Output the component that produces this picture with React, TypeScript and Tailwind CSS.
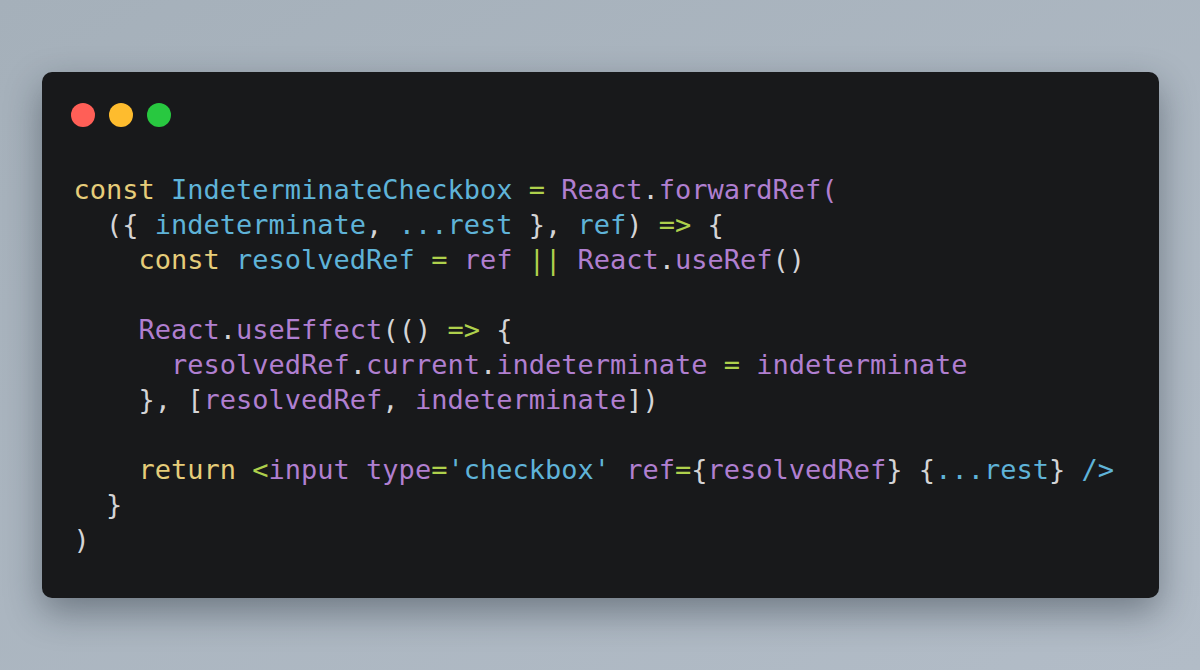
const C = {
  kw: "text-[#e6cd7a]",
  id: "text-[#5fb3d8]",
  fn: "text-[#b07fd0]",
  op: "text-[#aed04c]",
  pn: "text-[#d4d4d6]",
};

type Tok = [string, string];

const lines: Tok[][] = [
  [
    ["const ", C.kw],
    ["IndeterminateCheckbox ", C.id],
    ["= ", C.op],
    ["React", C.fn],
    [".", C.pn],
    ["forwardRef(", C.fn],
  ],
  [
    ["  ({ ", C.pn],
    ["indeterminate", C.id],
    [", ", C.pn],
    ["...rest ", C.id],
    ["}, ", C.pn],
    ["ref", C.id],
    [") ", C.pn],
    ["=> ", C.op],
    ["{", C.pn],
  ],
  [
    ["    const ", C.kw],
    ["resolvedRef ", C.id],
    ["= ", C.op],
    ["ref ", C.fn],
    ["|| ", C.op],
    ["React", C.fn],
    [".", C.pn],
    ["useRef", C.fn],
    ["()", C.pn],
  ],
  [],
  [
    ["    React", C.fn],
    [".", C.pn],
    ["useEffect", C.fn],
    ["(() ", C.pn],
    ["=> ", C.op],
    ["{", C.pn],
  ],
  [
    ["      resolvedRef", C.fn],
    [".", C.pn],
    ["current", C.fn],
    [".", C.pn],
    ["indeterminate ", C.fn],
    ["= ", C.op],
    ["indeterminate", C.fn],
  ],
  [
    ["    }, [", C.pn],
    ["resolvedRef", C.fn],
    [", ", C.pn],
    ["indeterminate", C.fn],
    ["])", C.pn],
  ],
  [],
  [
    ["    return ", C.kw],
    ["<", C.op],
    ["input type", C.fn],
    ["=", C.op],
    ["'checkbox' ", C.id],
    ["ref", C.fn],
    ["=", C.op],
    ["{", C.pn],
    ["resolvedRef", C.fn],
    ["} {", C.pn],
    ["...rest", C.id],
    ["} ", C.pn],
    ["/>", C.id],
  ],
  [["  }", C.pn]],
  [[")", C.pn]],
];

export default function App() {
  return (
    <div className="w-[1200px] h-[670px] flex items-center justify-center bg-gradient-to-br from-[#a5b0ba] to-[#b2bcc7]">
      <div className="w-[1117px] h-[526px] rounded-[10px] bg-[#18191b] shadow-[0_14px_36px_rgba(20,30,40,0.4)] pl-8 pt-[31px]">
        {/* Window controls */}
        <div className="flex items-center gap-[14px] -ml-[3px]">
          <span className="w-6 h-6 rounded-full bg-[#ff5f57]" />
          <span className="w-6 h-6 rounded-full bg-[#febc2e]" />
          <span className="w-6 h-6 rounded-full bg-[#28c840]" />
        </div>

        {/* Code */}
        <pre className="mt-[45px] text-[27px] leading-[35px] font-['DejaVu_Sans_Mono',monospace]">
          {lines.map((line, i) => (
            <div key={i} className="h-[35px] whitespace-pre">
              {line.map(([text, cls], j) => (
                <span key={j} className={cls}>
                  {text}
                </span>
              ))}
            </div>
          ))}
        </pre>
      </div>
    </div>
  );
}
